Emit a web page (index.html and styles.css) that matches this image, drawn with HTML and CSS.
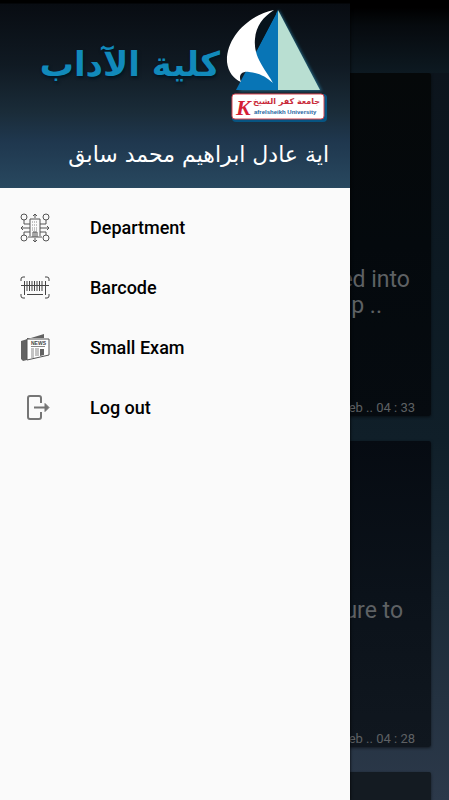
FILE: index.html
```html
<!DOCTYPE html>
<html lang="en">
<head>
<meta charset="utf-8">
<meta name="viewport" content="width=device-width, initial-scale=1">
<title>Kafrelsheikh University</title>
<link rel="stylesheet" href="styles.css">
</head>
<body>
<div class="app">
  <div class="screen">
    <header class="toolbar"></header>
    <main class="feed">
      <article class="card card-first">
        <p class="message">ed into<span class="message-end">up ..</span></p>
        <time class="date">Feb .. 04 : 33</time>
      </article>
      <article class="card card-second">
        <p class="message message-short">ure to</p>
        <time class="date">Feb .. 04 : 28</time>
      </article>
      <article class="card card-last"></article>
    </main>
  </div>
  <aside class="drawer">
    <div class="drawer-header">
      <div class="brand">
        <span class="faculty" lang="ar" dir="rtl">كلية الآداب</span>
        <svg class="logo" viewBox="0 0 104 116" role="img" aria-label="Kafrelsheikh University">
          <defs>
            <filter id="soft" x="-20%" y="-20%" width="140%" height="140%"><feGaussianBlur stdDeviation="1.5"/></filter>
          </defs>
          <path d="M55 4 98 85H15L44 27Z" fill="#2c91b8" opacity=".6" filter="url(#soft)"/>
          <path d="M54 4V84H12Z" fill="#0875b6"/>
          <path d="M54 4 96 84H54Z" fill="#b9dfd2"/>
          <path d="M50 5C34 9 31 25 33 44L52 8Z" fill="#07131c"/>
          <path d="M50 4C25 9 2 31 3 56C4 66 10 73 17 76C14 69 18 65 25 66C36 67 42 71 49 77C43 65 29 52 31 33C32 20 39 11 50 4Z" fill="#fff"/>
          <rect x="8" y="88" width="95" height="28" rx="4" fill="#075481"/>
          <rect x="8" y="88" width="92" height="25" rx="3" fill="#fff" stroke="#d94750" stroke-width="1"/>
          <text class="logo-initial" x="12" y="109">K</text>
          <text class="logo-arabic" x="96" y="98" direction="rtl" lang="ar">جامعة كفر الشيخ</text>
          <text class="logo-latin" x="30" y="108">afrelsheikh University</text>
        </svg>
      </div>
      <p class="user" lang="ar" dir="rtl">اية عادل ابراهيم محمد سابق</p>
    </div>
    <nav class="menu">
      <a class="item" href="#department">
        <svg class="icon" viewBox="0 0 30 30" fill="none" stroke="#555" aria-hidden="true">
          <g stroke-width="1"><circle cx="4" cy="4" r="3"/><circle cx="26" cy="4" r="3"/><circle cx="4" cy="25" r="3"/><circle cx="26" cy="25" r="3"/>
          <path d="M4 7v4h6M26 7v4h-6M4 22v-3h6M26 22v-3h-6M1 15h9M20 15h9M3 13l-2 2 2 2M27 13l2 2-2 2M15 5V1M13 3l2-2 2 2M15 25v4M13 27l2 2 2-2"/>
          <path d="M10 23V6h10v17M8 24h14M13 24v-5h4v5M15 19v5"/></g>
          <path d="M12 9h6M12 12h6M12 15h6M12 17h6" stroke="#888" stroke-dasharray="1 1"/>
        </svg>
        <span>Department</span>
      </a>
      <a class="item" href="#barcode">
        <svg class="icon" viewBox="0 0 30 30" fill="none" stroke="#444" aria-hidden="true">
          <path d="M1 8V6q0-2 2-2h2M25 4h2q2 0 2 2v2M1 21v2q0 2 2 2h2M25 25h2q2 0 2-2v-2M1 12.500h28M7 21.500h16" stroke-width="1"/>
          <path d="M4.500 8v14M7 8v10M9.500 8v10M12 8v10M14.500 8v10M17 8v10M19.500 8v10M22 8v10M25.500 8v14" stroke-width="1"/>
        </svg>
        <span>Barcode</span>
      </a>
      <a class="item" href="#small-exam">
        <svg class="icon" viewBox="0 0 30 30" aria-hidden="true">
          <path d="M1 8 24 1v4H7v22l-4 1-2-2Z" fill="#626262"/>
          <path d="M7 6h22v16L7 27Z" fill="#fff" stroke="#555" stroke-width="1"/>
          <text class="news" x="11" y="12">NEWS</text>
          <path d="M11 13.500h14M11 16h3M15 16h4M11 18h3M15 18h4M11 20h3M15 20h4M11 22h3M15 22h4M11 24h3" stroke="#888" stroke-width="1"/>
          <path d="M20 16h4v6l-4 1Z" fill="#626262"/>
        </svg>
        <span>Small Exam</span>
      </a>
      <a class="item" href="#logout">
        <svg class="icon" viewBox="0 0 30 30" fill="none" stroke="#757575" stroke-width="2" aria-hidden="true">
          <path d="M21 10V5q0-2-2-2H10q-2 0-2 2v19q0 2 2 2h9q2 0 2-2v-5M14 14.500h12"/>
          <path d="m25 10.500 4 4-4 4Z" fill="#757575" stroke-width="1"/>
        </svg>
        <span>Log out</span>
      </a>
    </nav>
  </aside>
</div>
</body>
</html>
```
FILE: styles.css
```css
* { box-sizing: border-box; }
body {
  margin: 0;
  font-family: Roboto, "Noto Sans", sans-serif;
  background: #0d1921;
}
.app {
  position: relative;
  height: 100vh;
  overflow: hidden;
}
.screen {
  display: flex;
  flex-direction: column;
  height: 100%;
  background: linear-gradient(#0c141c 73px, #0d1a23 35%, #101f29 55%, #1c2b38 75%, #2c394a 100%);
}
.toolbar {
  flex: 0 0 73px;
  background: linear-gradient(#000 10%, #060a0e 35%, #0d1921);
}
.feed {
  display: flex;
  flex: 1;
  flex-direction: column;
  gap: 25px;
  min-height: 0;
  overflow: hidden;
  padding: 0 18px;
}
.card {
  display: flex;
  flex: none;
  flex-direction: column;
  justify-content: space-between;
  padding: 0 16px 0 20px;
  border-radius: 2px;
  box-shadow: 0 1px 3px #0008;
  color: #5e6164;
  text-align: right;
}
.card-first {
  height: 343px;
  padding-top: 194px;
  background: linear-gradient(#050809, #04090d 50%, #060b10);
}
.card-second {
  height: 306px;
  padding-top: 157px;
  background: linear-gradient(#060b12, #0b121a 50%, #10171f);
}
.card-last {
  height: 306px;
  background: #141b22;
}
.message {
  margin: 0;
  padding-right: 5px;
  font-size: 23px;
  line-height: 26px;
}
.message-short { padding-right: 12px; }
.message-end {
  display: block;
  padding-right: 28px;
}
.date {
  font-size: 13px;
  line-height: 16px;
}
.drawer {
  position: absolute;
  inset: 0 99px 0 0;
  background: #fafafa;
  box-shadow: 0 0 3px #000;
}
.drawer-header {
  height: 188px;
  background: linear-gradient(#000 3px, #080c12 4px, #101a23 35%, #1a2c39 60%, #1f374e 75%, #28485f);
}
.brand {
  display: flex;
  align-items: flex-start;
  justify-content: flex-end;
  gap: 4px;
  height: 130px;
  padding: 6px 22px 0 0;
}
.faculty {
  margin-top: 30px;
  color: #118abb;
  font: bold 34px/56px "DejaVu Sans", sans-serif;
  white-space: nowrap;
  text-shadow: 1px 2px 3px #001522;
}
.logo {
  flex: none;
  width: 104px;
  height: 116px;
}
.logo-initial {
  fill: #d51f36;
  font: italic bold 22px "Liberation Serif", serif;
}
.logo-arabic {
  fill: #c92b3b;
  font: bold 8px "DejaVu Sans", sans-serif;
}
.logo-latin {
  fill: #2463a0;
  font: bold 6px "Liberation Sans", sans-serif;
}
.user {
  margin: 0;
  padding: 8px 21px 0;
  color: #fff;
  font: 22px/34px "DejaVu Sans", sans-serif;
  white-space: nowrap;
}
.menu {
  display: flex;
  flex-direction: column;
  padding-top: 10px;
}
.item {
  display: flex;
  align-items: center;
  gap: 40px;
  height: 60px;
  padding: 0 20px;
  color: #000;
  font-size: 18px;
  font-weight: 500;
  line-height: 24px;
  text-decoration: none;
}
.icon {
  flex: none;
  width: 30px;
  height: 30px;
}
.news {
  fill: #444;
  font: bold 5px "Liberation Sans", sans-serif;
}
```
